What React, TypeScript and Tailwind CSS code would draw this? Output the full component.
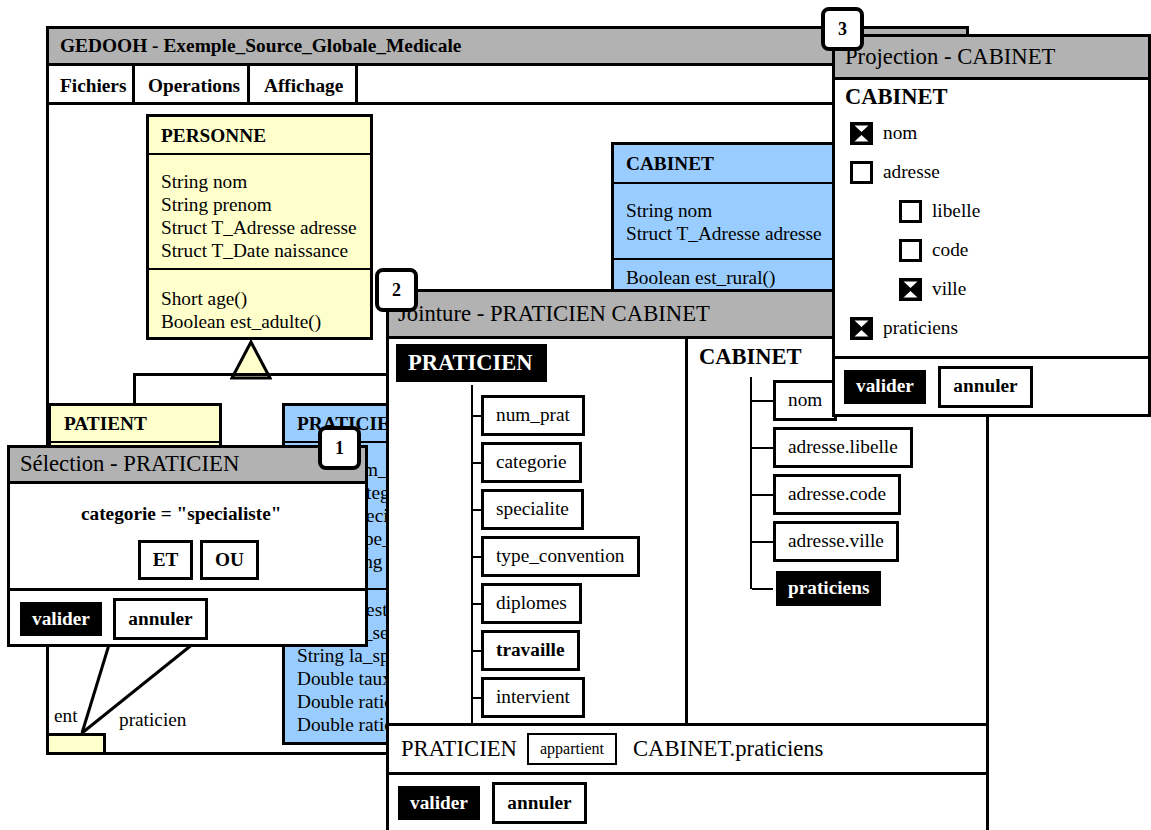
import React from "react";

function Badge({ n, className }: { n: string; className: string }) {
  return (
    <div
      className={
        "absolute w-[43px] h-[44px] rounded-[8px] border-[4px] border-black bg-white flex items-center justify-center text-[18px] font-bold font-['Liberation_Serif'] " +
        className
      }
    >
      {n}
    </div>
  );
}

function Valider() {
  return (
    <div className="h-[34px] w-[82px] bg-black text-white font-bold text-[19.3px] flex items-center justify-center">
      valider
    </div>
  );
}

function Annuler() {
  return (
    <div className="h-[42px] w-[95px] border-[3px] border-black bg-white font-bold text-[19.3px] flex items-center justify-center">
      annuler
    </div>
  );
}

function Lines({ items }: { items: string[] }) {
  return (
    <>
      {items.map((t, i) => (
        <div key={i} className="whitespace-nowrap h-[23px]">
          {t}
        </div>
      ))}
    </>
  );
}

function MainWindow() {
  return (
    <div className="absolute left-[46px] top-[26px] w-[923px] h-[729px] border-[3px] border-black bg-white flex flex-col font-['Liberation_Serif']">
      <div className="h-[37px] shrink-0 bg-[#b2b2b2] border-b-[3px] border-black flex items-center pl-[11px] text-[19.4px] font-bold whitespace-nowrap">
        GEDOOH - Exemple_Source_Globale_Medicale
      </div>
      <div className="h-[39px] shrink-0 border-b-[3px] border-black flex text-[19.3px] font-bold">
        <div className="w-[86px] border-r-[3px] border-black flex items-center pl-[11px] pt-[4px]">Fichiers</div>
        <div className="w-[115px] border-r-[3px] border-black flex items-center pl-[13px] pt-[4px]">Operations</div>
        <div className="w-[108px] border-r-[3px] border-black flex items-center pl-[14px] pt-[4px]">Affichage</div>
      </div>
      <div className="relative flex-1 overflow-hidden text-[19.3px] leading-[23px]">
        {/* PERSONNE */}
        <div className="absolute left-[97px] top-[9px] w-[227px] border-[3px] border-black bg-[#ffffcc]">
          <div className="h-[38px] border-b-2 border-black flex items-center pl-[12px] font-bold">PERSONNE</div>
          <div className="pt-[15px] pb-[6px] pl-[12px] border-b-2 border-black">
            <Lines items={["String nom", "String prenom", "Struct T_Adresse adresse", "Struct T_Date naissance"]} />
          </div>
          <div className="pt-[17px] pb-[4px] pl-[12px]">
            <Lines items={["Short age()", "Boolean est_adulte()"]} />
          </div>
        </div>

        {/* inheritance */}
        <svg className="absolute left-[181px] top-[235px]" width="42" height="41" viewBox="0 0 42 41">
          <polygon points="21,2 2,38 40,38" fill="#ffffcc" stroke="black" strokeWidth="3" strokeLinejoin="miter" />
        </svg>
        <div className="absolute left-[84px] top-[268px] w-[360px] h-[3px] bg-black" />
        <div className="absolute left-[84px] top-[268px] w-[3px] h-[32px] bg-black" />

        {/* CABINET */}
        <div className="absolute left-[562px] top-[37px] w-[260px] h-[200px] border-[3px] border-black bg-[#99ccff]">
          <div className="h-[39px] border-b-2 border-black flex items-center pl-[12px] font-bold">CABINET</div>
          <div className="pt-[15px] pb-[13px] pl-[12px] border-b-2 border-black">
            <Lines items={["String nom", "Struct T_Adresse adresse"]} />
          </div>
          <div className="pt-[6px] pl-[12px]">
            <Lines items={["Boolean est_rural()"]} />
          </div>
        </div>

        {/* PATIENT */}
        <div className="absolute left-[-1px] top-[298px] w-[174px] h-[240px] border-[3px] border-black bg-[#ffffcc]">
          <div className="h-[37px] border-b-2 border-black flex items-center pl-[13px] font-bold">PATIENT</div>
          <div className="h-[110px] border-b-2 border-black" />
        </div>

        {/* PRATICIEN */}
        <div className="absolute left-[233px] top-[298px] w-[240px] border-[3px] border-black bg-[#99ccff]">
          <div className="h-[37px] border-b-2 border-black flex items-center pl-[12px] font-bold">PRATICIEN</div>
          <div className="pt-[15px] pb-[15px] pl-[12px] border-b-2 border-black">
            <Lines
              items={[
                "Short num_prat",
                "String categorie",
                "String specialite",
                "String type_convention",
                "Tab_String diplomes",
              ]}
            />
          </div>
          <div className="pt-[8px] pb-[6px] pl-[12px]">
            <Lines
              items={[
                "Boolean est_specialiste()",
                "String le_secteur()",
                "String la_specialite()",
                "Double taux_remb()",
                "Double ratio_actes()",
                "Double ratio_visites()",
              ]}
            />
          </div>
        </div>

        {/* associations */}
        <svg className="absolute left-0 top-0" width="300" height="647" viewBox="0 0 300 647">
          <line x1="33" y1="628" x2="70" y2="507" stroke="black" strokeWidth="3" />
          <line x1="33" y1="628" x2="170" y2="518" stroke="black" strokeWidth="3" />
        </svg>
        <div className="absolute left-[5px] top-[599px]">ent</div>
        <div className="absolute left-[70px] top-[603px]">praticien</div>
        <div className="absolute left-[-3px] top-[628px] w-[60px] h-[30px] border-[3px] border-black bg-[#ffffcc]" />
      </div>
    </div>
  );
}

function SelectionWindow() {
  return (
    <div className="absolute left-[7px] top-[445px] w-[361px] h-[202px] border-[3px] border-black bg-white flex flex-col font-['Liberation_Serif']">
      <div className="h-[36px] shrink-0 bg-[#b2b2b2] border-b-[3px] border-black flex items-center pl-[10px] text-[22.7px] whitespace-nowrap">
        Sélection - PRATICIEN
      </div>
      <div className="h-[107px] shrink-0 border-b-[3px] border-black">
        <div className="pt-[18px] pl-[71px] text-[19.3px] leading-[23px] font-bold whitespace-nowrap">
          categorie = "specialiste"
        </div>
        <div className="mt-[15px] pl-[128px] flex gap-[7px] text-[19.3px] font-bold">
          <div className="w-[55px] h-[40px] border-[3px] border-black flex items-center justify-center">ET</div>
          <div className="w-[59px] h-[40px] border-[3px] border-black flex items-center justify-center">OU</div>
        </div>
      </div>
      <div className="flex-1 flex items-center pl-[10px] gap-[11px] pt-[3px]">
        <Valider />
        <Annuler />
      </div>
    </div>
  );
}

function TreeItem({ label, bold }: { label: string; bold?: boolean }) {
  return (
    <div className="flex items-center">
      <div className="w-[8px] h-[2px] bg-black" />
      <div
        className={
          "h-[41px] border-[3px] border-black bg-white px-[12px] flex items-center text-[19.3px] whitespace-nowrap " +
          (bold ? "font-bold" : "")
        }
      >
        {label}
      </div>
    </div>
  );
}

function TreeItemR({ label, dark }: { label: string; dark?: boolean }) {
  return (
    <div className="flex items-center">
      <div className="w-[21px] h-[2px] bg-black" />
      {dark ? (
        <div className="h-[41px] border-[3px] border-white bg-black text-white font-bold px-[12px] flex items-center text-[19.3px] whitespace-nowrap">
          {label}
        </div>
      ) : (
        <div className="h-[41px] border-[3px] border-black bg-white px-[12px] flex items-center text-[19.3px] whitespace-nowrap">
          {label}
        </div>
      )}
    </div>
  );
}

function JointureWindow() {
  return (
    <div className="absolute left-[386px] top-[289px] w-[603px] h-[560px] border-[3px] border-black bg-white flex flex-col font-['Liberation_Serif']">
      <div className="h-[47px] shrink-0 bg-[#b2b2b2] border-b-[3px] border-black flex items-center pl-[9px] text-[22.7px] whitespace-nowrap">
        Jointure - PRATICIEN CABINET
      </div>
      <div className="h-[387px] shrink-0 border-b-[3px] border-black flex">
        <div className="w-[299px] border-r-[3px] border-black flex flex-col">
          <div className="ml-[7px] mt-[5px] w-[151px] h-[38px] shrink-0 bg-black text-white font-bold text-[22.5px] pl-[12px] flex items-center">
            PRATICIEN
          </div>
          <div className="ml-[82px] mt-[3px] flex-1 border-l-2 border-black pt-[10px] flex flex-col gap-[6px]">
            <TreeItem label="num_prat" />
            <TreeItem label="categorie" />
            <TreeItem label="specialite" />
            <TreeItem label="type_convention" />
            <TreeItem label="diplomes" />
            <TreeItem label="travaille" bold />
            <TreeItem label="intervient" />
          </div>
        </div>
        <div className="flex-1 flex flex-col">
          <div className="pl-[11px] pt-[5px] text-[22.5px] leading-[26px] font-bold">CABINET</div>
          <div className="relative ml-[62px] mt-[7px] pt-[3px] w-fit">
            <div className="absolute left-0 top-0 bottom-[20px] w-[2px] bg-black" />
            <div className="pl-[2px] flex flex-col gap-[6px]">
              <TreeItemR label="nom" />
              <TreeItemR label="adresse.libelle" />
              <TreeItemR label="adresse.code" />
              <TreeItemR label="adresse.ville" />
              <TreeItemR label="praticiens" dark />
            </div>
          </div>
        </div>
      </div>
      <div className="h-[49px] shrink-0 border-b-[3px] border-black flex items-center pl-[12px] text-[22.7px] whitespace-nowrap">
        <span>PRATICIEN</span>
        <div className="ml-[10px] w-[90px] h-[32px] border-2 border-black text-[16px] flex items-center justify-center">
          appartient
        </div>
        <span className="ml-[16px]">CABINET.praticiens</span>
      </div>
      <div className="h-[56px] shrink-0 flex items-center pl-[9px] gap-[12px]">
        <Valider />
        <Annuler />
      </div>
    </div>
  );
}

function Check({ checked }: { checked?: boolean }) {
  return checked ? (
    <svg width="23" height="23" viewBox="0 0 23 23" className="shrink-0">
      <rect x="0" y="0" width="23" height="23" fill="black" />
      <polygon points="4.5,3.5 18.5,3.5 11.5,10" fill="white" />
      <polygon points="4.5,19.5 18.5,19.5 11.5,13" fill="white" />
    </svg>
  ) : (
    <div className="w-[23px] h-[23px] shrink-0 border-[3px] border-black bg-white" />
  );
}

function CheckRow({ label, checked, indent }: { label: string; checked?: boolean; indent?: boolean }) {
  return (
    <div className={"h-[39px] flex items-center " + (indent ? "pl-[64px]" : "pl-[15px]")}>
      <Check checked={checked} />
      <span className="ml-[10px] text-[19.3px]">{label}</span>
    </div>
  );
}

function ProjectionWindow() {
  return (
    <div className="absolute left-[832px] top-[34px] w-[319px] h-[383px] border-[3px] border-black bg-white flex flex-col font-['Liberation_Serif']">
      <div className="h-[43px] shrink-0 bg-[#b2b2b2] border-b-[3px] border-black flex items-center pl-[10px] text-[22.7px] whitespace-nowrap">
        Projection - CABINET
      </div>
      <div className="h-[279px] shrink-0 border-b-[3px] border-black">
        <div className="pl-[10px] pt-[4px] text-[22.5px] leading-[26px] font-bold">CABINET</div>
        <div className="mt-[4px] flex flex-col">
          <CheckRow label="nom" checked />
          <CheckRow label="adresse" />
          <CheckRow label="libelle" indent />
          <CheckRow label="code" indent />
          <CheckRow label="ville" checked indent />
          <CheckRow label="praticiens" checked />
        </div>
      </div>
      <div className="flex-1 flex items-center pl-[9px] gap-[12px]">
        <Valider />
        <Annuler />
      </div>
    </div>
  );
}

export default function App() {
  return (
    <div className="relative w-[1151px] h-[830px] overflow-hidden bg-white text-black font-['Liberation_Serif']">
      <MainWindow />
      <SelectionWindow />
      <JointureWindow />
      <ProjectionWindow />
      <Badge n="1" className="left-[318px] top-[426px]" />
      <Badge n="2" className="left-[375px] top-[268px]" />
      <Badge n="3" className="left-[821px] top-[7px]" />
    </div>
  );
}
